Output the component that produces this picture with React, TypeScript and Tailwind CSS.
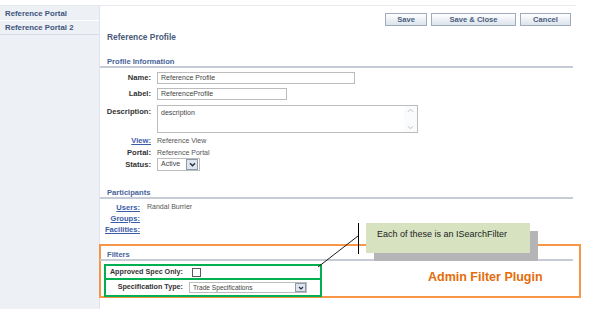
import React from "react"

const Chevron = ({ className = "" }: { className?: string }) => (
  <svg viewBox="0 0 8 6" className={className}>
    <path d="M1 1.5 L4 4.5 L7 1.5" fill="none" stroke="#1f2a3a" strokeWidth="1.6" />
  </svg>
)

function Sidebar() {
  return (
    <div className="w-[100px] h-[303px] bg-[#edf0f5] border-r border-[#dfe3ea]">
      <div className="h-[15px] leading-[15px] pl-[5px] text-[7.8px] font-bold text-[#3e557c] border-b border-white">
        Reference Portal
      </div>
      <div className="h-[14px] leading-[13px] pl-[5px] text-[7.8px] font-bold text-[#3e557c] border-b border-[#d6dbe3]">
        Reference Portal 2
      </div>
    </div>
  )
}

function SectionHeader({ title, className = "" }: { title: string; className?: string }) {
  return (
    <div
      className={`w-[473px] pl-[7px] leading-[9px] text-[7.6px] font-bold text-[#47659a] border-b-2 border-[#c6ccd5] ${className}`}
    >
      {title}
    </div>
  )
}

function Row({
  label,
  link,
  className = "",
  children,
}: {
  label: string
  link?: boolean
  className?: string
  children: React.ReactNode
}) {
  return (
    <div className={`flex items-center ${className}`}>
      <div
        className={`w-[51px] text-right text-[7.6px] font-bold ${
          link ? "text-[#3b5ca8] underline" : "text-[#333]"
        }`}
      >
        {label}
      </div>
      <div className="ml-[6px] flex items-center text-[7px] text-[#555]">{children}</div>
    </div>
  )
}

function Main() {
  return (
    <div className="w-[476px] flex flex-col">
      <div className="flex justify-end gap-[4px] pr-[5px] pt-[7px]">
        {[
          { label: "Save", w: "w-[42px]" },
          { label: "Save & Close", w: "w-[85px]" },
          { label: "Cancel", w: "w-[51px]" },
        ].map(b => (
          <button
            key={b.label}
            className={`${b.w} h-[13px] border border-[#9eabbb] bg-gradient-to-b from-white to-[#dce3ec] text-[7.6px] font-bold text-[#4a5f80] leading-[11px]`}
          >
            {b.label}
          </button>
        ))}
      </div>

      <div className="mt-[6px] pl-[7px] leading-[10px] text-[8.4px] font-bold text-[#4a5a78]">
        Reference Profile
      </div>

      <SectionHeader title="Profile Information" className="mt-[15px]" />

      <Row label="Name:" className="mt-[4px] h-[12px]">
        <div className="w-[198px] h-[12px] border border-[#bcbcbc] bg-white pl-[3px] leading-[10px] text-[#444]">
          Reference Profile
        </div>
      </Row>
      <Row label="Label:" className="mt-[4px] h-[12px]">
        <div className="w-[130px] h-[12px] border border-[#bcbcbc] bg-white pl-[3px] leading-[10px] text-[#444]">
          ReferenceProfile
        </div>
      </Row>
      <div className="mt-[5px] flex items-start h-[28px]">
        <div className="w-[51px] pt-[1px] text-right text-[7.6px] font-bold text-[#333]">Description:</div>
        <div className="ml-[6px] flex w-[261px] h-[28px] border border-[#bcbcbc] bg-white">
          <div className="flex-1 pl-[3px] pt-[2px] text-[7px] leading-[9px] text-[#444]">description</div>
          <div className="w-[13px] flex flex-col justify-between items-center py-[2px] bg-[#fafbfc]">
            <svg viewBox="0 0 8 6" className="w-[7px] h-[5px]">
              <path d="M1 4.5 L4 1.5 L7 4.5" fill="none" stroke="#b7bfca" strokeWidth="1.2" />
            </svg>
            <svg viewBox="0 0 8 6" className="w-[7px] h-[5px]">
              <path d="M1 1.5 L4 4.5 L7 1.5" fill="none" stroke="#b7bfca" strokeWidth="1.2" />
            </svg>
          </div>
        </div>
      </div>
      <Row label="View:" link className="mt-[3px] h-[10px]">
        Reference View
      </Row>
      <Row label="Portal:" className="mt-[2px] h-[10px]">
        Reference Portal
      </Row>
      <Row label="Status:" className="h-[13px]">
        <div className="w-[43px] h-[13px] border border-[#bcbcbc] bg-white flex items-center justify-between">
          <span className="pl-[3px] text-[#444]">Active</span>
          <span className="w-[12px] h-[11px] mr-[1px] border border-[#8d9aac] bg-[#dfe5ee] flex items-center justify-center">
            <Chevron className="w-[7px] h-[5px]" />
          </span>
        </div>
      </Row>

      <SectionHeader title="Participants" className="mt-[17px]" />

      <div className="mt-[3px] flex flex-col">
        {[
          { label: "Users:", value: "Randal Burrier" },
          { label: "Groups:", value: "" },
          { label: "Facilities:", value: "" },
        ].map(p => (
          <div key={p.label} className="flex items-center h-[11px]">
            <div className="w-[40px] text-right text-[7.6px] font-bold text-[#3b5ca8] underline">{p.label}</div>
            <div className="ml-[7px] text-[7px] text-[#555]">{p.value}</div>
          </div>
        ))}
      </div>

      <div className="mt-[9px] -ml-[1px] w-[482px] h-[54px] border-2 border-[#f79646]">
        <SectionHeader title="Filters" className="-ml-[1px] pt-0 mt-[4px]" />
        <div className="flex items-start mt-[3px]">
          <div className="ml-[3px] w-[218px] flex flex-col relative">
            <div className="h-[16px] border-2 border-[#00b050] flex items-center">
              <div className="w-[77px] text-right text-[7.2px] font-bold text-[#333]">Approved Spec Only:</div>
              <div className="ml-[9px] w-[9px] h-[9px] border border-[#5a5a5a] bg-white" />
            </div>
            <div className="h-[17px] border-2 border-t-0 border-[#00b050] flex items-center">
              <div className="w-[77px] text-right text-[7.2px] font-bold text-[#333]">Specification Type:</div>
              <div className="ml-[6px] w-[118px] h-[11px] border border-[#bcbcbc] bg-white flex items-center justify-between">
                <span className="pl-[3px] text-[6.6px] text-[#444]">Trade Specifications</span>
                <span className="w-[11px] h-[9px] border border-[#8d9aac] bg-[#dfe5ee] flex items-center justify-center">
                  <Chevron className="w-[6px] h-[4px]" />
                </span>
              </div>
            </div>
          </div>
          <div className="ml-[106px] mt-[6px] leading-[14px] text-[12.5px] font-bold text-[#e46c0a]">
            Admin Filter Plugin
          </div>
        </div>
      </div>
    </div>
  )
}

function Callout() {
  return (
    <>
      <div className="absolute left-[374px] top-[231px] w-[164px] h-[30px] bg-[#b5b5b7]" />
      <div className="absolute left-[366px] top-[223px] w-[164px] h-[30px] bg-[#d7e2c0] pl-[11px] pt-[6px] leading-[10px] text-[9px] text-[#222]">
        Each of these is an ISearchFilter
      </div>
      <svg className="absolute left-0 top-0 w-[608px] h-[320px] pointer-events-none" viewBox="0 0 608 320">
        <line x1="358.5" y1="223" x2="358.5" y2="254" stroke="#000" strokeWidth="1" />
        <line x1="318" y1="267" x2="358" y2="236" stroke="#000" strokeWidth="0.9" />
      </svg>
    </>
  )
}

export default function App() {
  return (
    <div className="relative w-[608px] h-[320px] bg-white overflow-hidden font-['Liberation_Sans',Arial,sans-serif] text-[#333]">
      <div className="pt-[5px]">
        <div className="flex w-[576px] border-t border-[#e6e9ee]">
          <Sidebar />
          <Main />
        </div>
      </div>
      <Callout />
    </div>
  )
}
